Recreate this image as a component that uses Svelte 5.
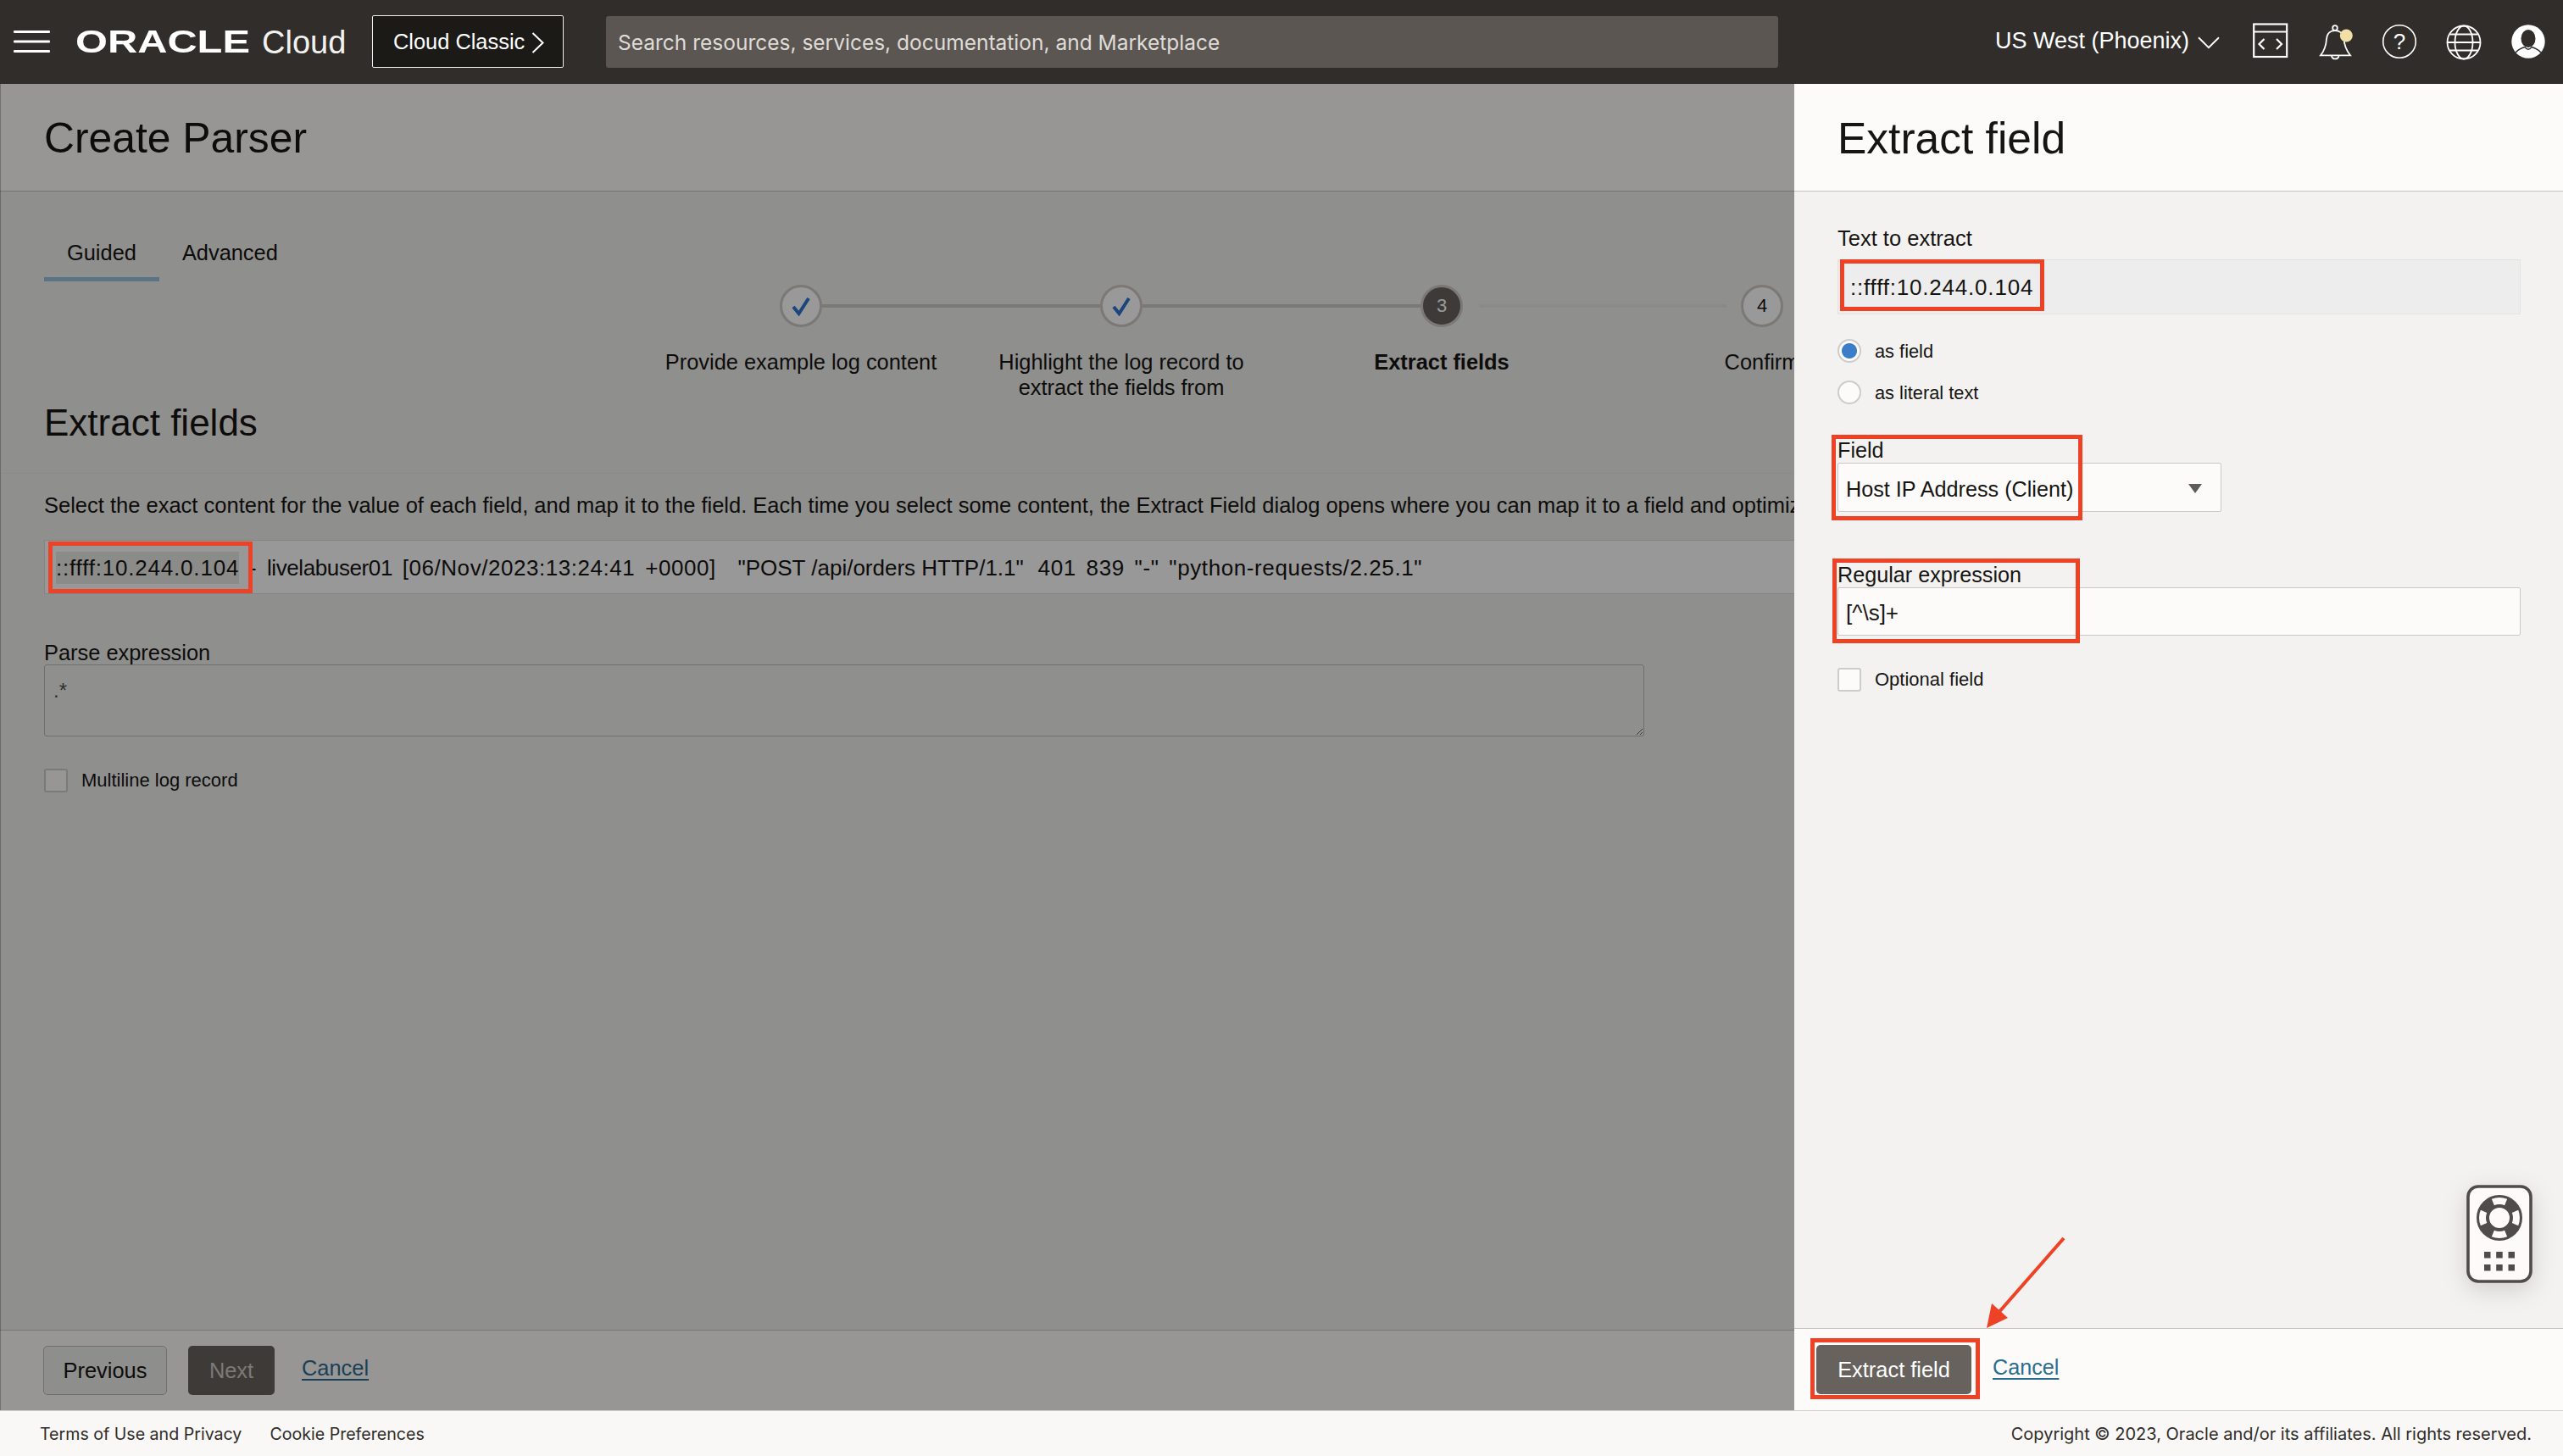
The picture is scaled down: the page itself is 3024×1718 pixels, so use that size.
<script>
  const steps = [
    { label: 'Provide example log content', state: 'done' },
    { label: 'Highlight the log record to extract the fields from', state: 'done' },
    { label: 'Extract fields', state: 'current', num: 3 },
    { label: 'Confirm', state: 'todo', num: 4 }
  ];
</script>

<div class="app">
  <header class="topbar">
    <svg class="burger" width="43" height="26" viewBox="0 0 43 26" aria-label="Menu">
      <rect y="0" width="43" height="3" rx="1" />
      <rect y="11.5" width="43" height="3" rx="1" />
      <rect y="23" width="43" height="3" rx="1" />
    </svg>
    <div class="brand">
      <span class="oracle"><span class="oracle-text">ORACLE</span></span>
      <span class="cloud">Cloud</span>
    </div>
    <button class="classic">
      Cloud Classic
      <svg width="15" height="25" viewBox="0 0 15 25"><path d="M1.5 1 L13.5 12.5 L1.5 24" fill="none" stroke="#fff" stroke-width="2" /></svg>
    </button>
    <div class="search">Search resources, services, documentation, and Marketplace</div>
    <div class="region">
      US West (Phoenix)
      <svg width="27" height="15" viewBox="0 0 27 15"><path d="M1 1 L13.5 13.5 L26 1" fill="none" stroke="#fff" stroke-width="2" /></svg>
    </div>
    <div class="icons">
      <svg width="46" height="46" viewBox="0 0 46 46" class="ico">
        <rect x="3.2" y="2.5" width="39" height="38.5" fill="none" stroke="#fff" stroke-width="2.2" />
        <path d="M3 11.5 H42" stroke="#fff" stroke-width="2.2" />
        <path d="M15.5 20 L9.5 26 L15.5 32 M30 20 L36 26 L30 32" fill="none" stroke="#fff" stroke-width="2.2" />
      </svg>
      <svg width="46" height="46" viewBox="0 0 46 46" class="ico">
        <circle cx="23" cy="7" r="2.8" fill="none" stroke="#fff" stroke-width="1.8" />
        <path d="M6 39.3 H41 C36 33 34 28 33.5 20 C33 13 28 10 23 10 C18 10 13.5 13 13 20 C12.5 28 11 33 6 39.3 Z" fill="none" stroke="#fff" stroke-width="1.8" />
        <path d="M19 40 a4.3 4 0 0 0 8.5 0" fill="none" stroke="#fff" stroke-width="1.8" />
        <circle cx="36.3" cy="16" r="7.5" fill="#f1dfa5" />
      </svg>
      <svg width="46" height="46" viewBox="0 0 46 46" class="ico">
        <circle cx="23" cy="23" r="19.3" fill="none" stroke="#fff" stroke-width="1.6" />
        <text x="23" y="32" text-anchor="middle" class="q">?</text>
      </svg>
      <svg width="46" height="46" viewBox="0 0 46 46" class="ico">
        <g fill="none" stroke="#fff" stroke-width="1.8">
          <circle cx="23" cy="24" r="19.5" />
          <ellipse cx="23" cy="24" rx="10.5" ry="19.5" />
          <path d="M3.5 24 H42.5 M6.5 14.5 H39.5 M6.5 33.5 H39.5" />
        </g>
      </svg>
      <svg width="46" height="46" viewBox="0 0 46 46" class="ico">
        <circle cx="23" cy="23" r="19.7" fill="#fff" />
        <ellipse cx="23" cy="19.5" rx="8.5" ry="10.5" fill="#312d2a" />
        <path d="M8 36 C13 31 17 30 19 29.5 C21 33 25 33 27 29.5 C29 30 33 31 38 36" fill="none" stroke="#312d2a" stroke-width="1.5" />
      </svg>
    </div>
  </header>

  <main class="main">
    <section class="page">
      <div class="page-title"><h1>Create Parser</h1></div>
      <div class="page-body">
        <nav class="tabs">
          <span class="tab active">Guided</span>
          <span class="tab">Advanced</span>
        </nav>
        <ol class="stepper">
          {#each steps as s, i}
            <li class="step {s.state}">
              {#if i < steps.length - 1}<span class="bar"></span>{/if}
              <span class="dot">
                {#if s.state === 'done'}
                  <svg width="22" height="23" viewBox="0 0 22 23"><path d="M2 12 L8.5 20 L20 2" fill="none" stroke="#2f72d0" stroke-width="4" /></svg>
                {:else}
                  {s.num}
                {/if}
              </span>
              <span class="step-label">{s.label}</span>
            </li>
          {/each}
        </ol>
        <h2>Extract fields</h2>
        <p class="desc">Select the exact content for the value of each field, and map it to the field. Each time you select some content, the Extract Field dialog opens where you can map it to a field and optimize the expression.</p>
        <div class="logbox"><span class="logline"><span class="hl">::ffff:10.244.0.104</span> - <span class="user">livelabuser01</span> [06/Nov/2023:13:24:41 +0000] <span class="req">"POST /api/orders HTTP/1.1"</span> <span class="tail">401 839 "-" "python-requests/2.25.1"</span></span></div>
        <label class="lbl parse-lbl" for="parse">Parse expression</label>
        <textarea id="parse" class="parse" readonly>.*</textarea>
        <div class="check multi"><span class="box"></span><span>Multiline log record</span></div>
      </div>
      <div class="page-foot">
        <button class="btn ghost">Previous</button>
        <button class="btn solid next">Next</button>
        <span class="link">Cancel</span>
      </div>
      <div class="scrim"></div>
    </section>

    <aside class="panel">
      <div class="panel-title"><h1>Extract field</h1></div>
      <div class="panel-body">
        <div class="lbl first">Text to extract</div>
        <div class="readonly">::ffff:10.244.0.104</div>
        <div class="radio r1"><span class="circle on"></span><span class="rtext">as field</span></div>
        <div class="radio r2"><span class="circle"></span><span class="rtext">as literal text</span></div>
        <div class="lbl field-lbl">Field</div>
        <div class="select">
          <span>Host IP Address (Client)</span>
          <svg width="16" height="11" viewBox="0 0 16 11"><path d="M0 0 H16 L8 11 Z" fill="#5f5b57" /></svg>
        </div>
        <div class="lbl regex-lbl">Regular expression</div>
        <div class="input">[^\s]+</div>
        <div class="check optional"><span class="box"></span><span>Optional field</span></div>
      </div>
      <div class="panel-foot">
        <button class="btn solid extract">Extract field</button>
        <span class="link">Cancel</span>
      </div>
      <svg class="helper" width="78" height="116" viewBox="0 0 78 116">
        <rect x="2" y="2" width="74" height="112" rx="12" fill="#fcfbf9" stroke="#4f4c49" stroke-width="3.6" />
        <circle cx="39" cy="39" r="19.5" fill="none" stroke="#4f4c49" stroke-width="15" />
        <circle cx="39" cy="39" r="20" fill="none" stroke="#fcfbf9" stroke-width="8" pathLength="360" stroke-dasharray="45 45" stroke-dashoffset="22.5" />
        <g fill="#4f4c49">
          <rect x="21" y="79" width="7.5" height="7.5" /><rect x="35.2" y="79" width="7.5" height="7.5" /><rect x="49.5" y="79" width="7.5" height="7.5" />
          <rect x="21" y="94" width="7.5" height="7.5" /><rect x="35.2" y="94" width="7.5" height="7.5" /><rect x="49.5" y="94" width="7.5" height="7.5" />
        </g>
      </svg>
    </aside>
  </main>

  <footer class="foot">
    <div class="foot-links"><span>Terms of Use and Privacy</span><span>Cookie Preferences</span></div>
    <span>Copyright © 2023, Oracle and/or its affiliates. All rights reserved.</span>
  </footer>

  <span class="mark m-log"></span>
  <span class="mark m-text"></span>
  <span class="mark m-field"></span>
  <span class="mark m-regex"></span>
  <span class="mark m-extract"></span>
  <svg class="arrow" width="100" height="112" viewBox="0 0 100 112">
    <path d="M95 1 L17 90" stroke="#ee4226" stroke-width="4" fill="none" />
    <path d="M4 107 L10 78 L29 95 Z" fill="#ee4226" />
  </svg>
</div>

<style>
  :global(body) { margin: 0; overflow: hidden; background: #fcfbf9; }
  .app {
    position: relative; width: 3024px; height: 1718px; display: flex; flex-direction: column;
    font-family: "Liberation Sans", Arial, sans-serif; font-size: 25.4px; line-height: 30px; color: #161513; overflow: hidden;
  }
  h1, h2, p, ol { margin: 0; padding: 0; font-weight: 400; }

  .topbar { flex: 0 0 99px; display: flex; align-items: center; background: #312d2a; color: #fff; }
  .burger { margin: -1px 0 0 16px; fill: #fff; flex: none; }
  .brand { display: flex; align-items: center; margin-left: 30px; width: 350px; flex: none; }
  .oracle { width: 220px; display: block; height: 40px; }
  .oracle-text { display: inline-block; font-weight: 700; font-size: 36px; line-height: 40px; transform: scaleX(1.355); transform-origin: left center; }
  .cloud { font-size: 38px; line-height: 40px; font-weight: 400; color: #f2f1ef; }
  .classic {
    flex: none; width: 226px; height: 62px; box-sizing: border-box; background: #1b1a17; color: #fff; border: 1px solid #f0efed; border-radius: 2px;
    font: 25.4px/30px "Liberation Sans", Arial, sans-serif; display: flex; align-items: center; gap: 8px; padding: 0 0 0 24px; white-space: nowrap; margin-bottom: 1px;
  }
  .classic svg { margin-top: 2px; }
  .search {
    flex: none; width: 1383px; height: 61px; box-sizing: border-box; margin-left: 50px; padding-left: 14px; background: #5b5652; border-radius: 3px;
    color: #dfdcd8; font: 24.5px/62px "Inter", "Liberation Sans", sans-serif; white-space: nowrap;
  }
  .region { flex: none; margin-left: 256px; width: 265px; display: flex; align-items: center; gap: 10px; font-size: 27px; white-space: nowrap; margin-top: -4px; }
  .region svg { margin-top: 6px; }
  .icons { display: flex; gap: 30px; margin-left: 37px; margin-top: -1px; }
  .ico { flex: none; }
  .q { fill: #fff; font-size: 26px; font-family: "Liberation Sans", sans-serif; }

  .main { flex: 1; display: flex; min-height: 0; }
  .page { position: relative; width: 2117px; flex: none; display: flex; flex-direction: column; overflow: hidden; background: #efeeeb; }
  .scrim { position: absolute; inset: 0; background: rgba(0, 0, 0, 0.4); box-shadow: inset 1px 0 0 rgba(0, 0, 0, 0.25); }
  .page-title, .panel-title { flex: 0 0 127px; box-sizing: border-box; background: #fcfbf9; border-bottom: 1px solid #c4c3c1; }
  .page-title h1, .panel-title h1 { line-height: 64px; padding-top: 32px; }
  .page-title h1 { padding-left: 52px; font-size: 49.8px; }
  .page-body { flex: 1; padding-left: 52px; min-height: 0; }

  .tabs { display: flex; margin-top: 57px; }
  .tab { padding: 0 27px 14px; border-bottom: 5px solid transparent; }
  .tab.active { border-bottom-color: #96c1dc; }

  .stepper { list-style: none; display: flex; margin: 4px 0 0 704px; width: 1512px; height: 136px; }
  .step { position: relative; flex: 0 0 378px; display: flex; flex-direction: column; align-items: center; text-align: center; }
  .dot {
    width: 50px; height: 50px; box-sizing: border-box; border-radius: 50%; border: 3px solid #cdc8c5; background: #fff; display: flex; align-items: center; justify-content: center; font-size: 22px; color: #161513; position: relative;
  }
  .step.current .dot { background: #67625d; color: #fff; border-color: #cdc8c5; }
  .bar { position: absolute; left: calc(50% + 25px); width: 328px; top: 23px; height: 4px; background: #cdcac7; }
  .step.current .bar { left: calc(50% + 44px); width: 292px; background: #e6e6e3; }
  .step-label { margin-top: 26px; width: 300px; }
  .step.done:first-child .step-label { width: 340px; }
  .step.current .step-label { font-weight: 700; }
  .step.todo .step-label { white-space: nowrap; }

  h2 { font-size: 44px; line-height: 50px; margin-top: 2px; }
  .desc { margin: 34px 0 0 -52px; padding: 22px 0 0 52px; border-top: 1px solid #e8e8e4; white-space: nowrap; font-size: 25.5px; }
  .logbox {
    margin-top: 26px; width: 2200px; height: 64px; box-sizing: border-box; padding: 1px 0 0 13px; background: #fefefd; border: 1px solid #ddd; display: flex; align-items: center; white-space: pre; font-size: 26px; letter-spacing: 0.55px; word-spacing: 4px;
  }
  .hl { display: inline-block; background: #e8e8e4; height: 38px; line-height: 38px; letter-spacing: 0.8px; }
  .user { letter-spacing: -0.4px; }
  .req { letter-spacing: 0; word-spacing: 0; margin-left: 14px; }
  .tail { margin-left: 5px; letter-spacing: 0.6px; }
  .lbl { line-height: 30px; }
  .parse-lbl { display: block; margin-top: 54px; }
  .parse {
    display: block; margin-top: -1px; width: 1888px; height: 85px; box-sizing: border-box; border: 1px solid #bdbab6; border-radius: 3px; background: #efeeeb; padding: 15px 10px; font: 24px/30px "Liberation Sans", sans-serif; color: #55524f; outline: none;
  }
  .check { display: flex; align-items: center; gap: 16px; font-size: 22px; }
  .box { width: 28px; height: 28px; box-sizing: border-box; border: 2px solid #ccc; border-radius: 3px; background: #fcfbf9; flex: none; }
  .multi { margin-top: 37px; }

  .page-foot, .panel-foot { box-sizing: border-box; border-top: 1px solid #c4c3c1; background: #fcfbf9; display: flex; align-items: center; }
  .page-foot { flex: 0 0 95px; padding-left: 51px; }
  .btn { height: 58px; box-sizing: border-box; border-radius: 5px; font: 25.4px/30px "Liberation Sans", Arial, sans-serif; padding: 0; }
  .ghost { width: 146px; background: #ededea; border: 1.5px solid #bdb9b2; color: #161513; }
  .solid { background: #67625d; color: #fff; border: 0; }
  .next { width: 102px; margin-left: 25px; color: #cdcbc5; }
  .link { color: #2b6c91; text-decoration: underline; text-underline-offset: 4px; margin-left: 32px; margin-bottom: 6px; }

  .panel { position: relative; flex: 1; display: flex; flex-direction: column; background: #f3f2f0; font-size: 25.2px; }
  .panel-title h1 { padding-left: 51px; font-size: 51.5px; }
  .panel-body { flex: 1; padding: 40px 50px 0 51px; min-height: 0; }
  .first { font-size: 25.5px; }
  .readonly {
    margin-top: 10px; height: 65px; box-sizing: border-box; background: #ededed; border: 1px solid #e3e3e1; display: flex; align-items: center; padding-left: 14px; font-size: 26px; letter-spacing: 0.8px;
  }
  .radio { display: flex; align-items: center; gap: 16px; font-size: 21.8px; height: 28px; }
  .rtext { padding-top: 2px; }
  .r1 { margin-top: 29px; }
  .r2 { margin-top: 21px; }
  .circle { width: 28px; height: 28px; box-sizing: border-box; border-radius: 50%; border: 2px solid #ccc; background: #fcfbf9; flex: none; position: relative; }
  .circle.on { background: radial-gradient(circle, #3a7dc9 0, #3a7dc9 8.5px, #fcfbf9 9.5px); }
  .field-lbl { margin-top: 40px; line-height: 29px; }
  .select {
    width: 453px; height: 58px; box-sizing: border-box; border: 1px solid #c9c8c6; border-radius: 2px; background: #fcfbf9; display: flex; align-items: center; justify-content: space-between; padding: 2px 22px 0 9px;
  }
  .select span { padding-top: 2px; }
  .regex-lbl { margin-top: 59px; }
  .input {
    height: 57px; box-sizing: border-box; border: 1px solid #c9c8c6; border-radius: 2px; background: #fcfbf9; display: flex; align-items: center; padding: 2px 0 0 9px; font-size: 26px;
  }
  .optional { margin-top: 37px; }
  .panel-foot { flex: 0 0 97px; padding-left: 26px; }
  .extract { width: 183px; }
  .panel-foot .link { margin-left: 25px; }
  .helper { position: absolute; left: 793px; top: 1299px; filter: drop-shadow(0 8px 14px rgba(0,0,0,0.14)); }

  .foot {
    flex: 0 0 54px; display: flex; align-items: center; justify-content: space-between; padding: 0 37px 0 47px; background: #f9f8f6; border-top: 1px solid #d0cfcd; box-sizing: border-box; font: 20px/24px "Inter", "Liberation Sans", sans-serif; color: #2f2c29;
  }
  .foot-links { display: flex; gap: 33px; font-size: 19.6px; }

  .mark { position: absolute; box-sizing: border-box; border: 5px solid #ee4226; }
  .m-log { left: 57px; top: 639px; width: 241px; height: 61px; }
  .m-text { left: 2171px; top: 306px; width: 241px; height: 61px; }
  .m-field { left: 2161px; top: 513px; width: 296px; height: 101px; }
  .m-regex { left: 2162px; top: 659px; width: 292px; height: 100px; }
  .m-extract { left: 2136px; top: 1579px; width: 200px; height: 72px; }
  .arrow { position: absolute; left: 2340px; top: 1460px; }
</style>
